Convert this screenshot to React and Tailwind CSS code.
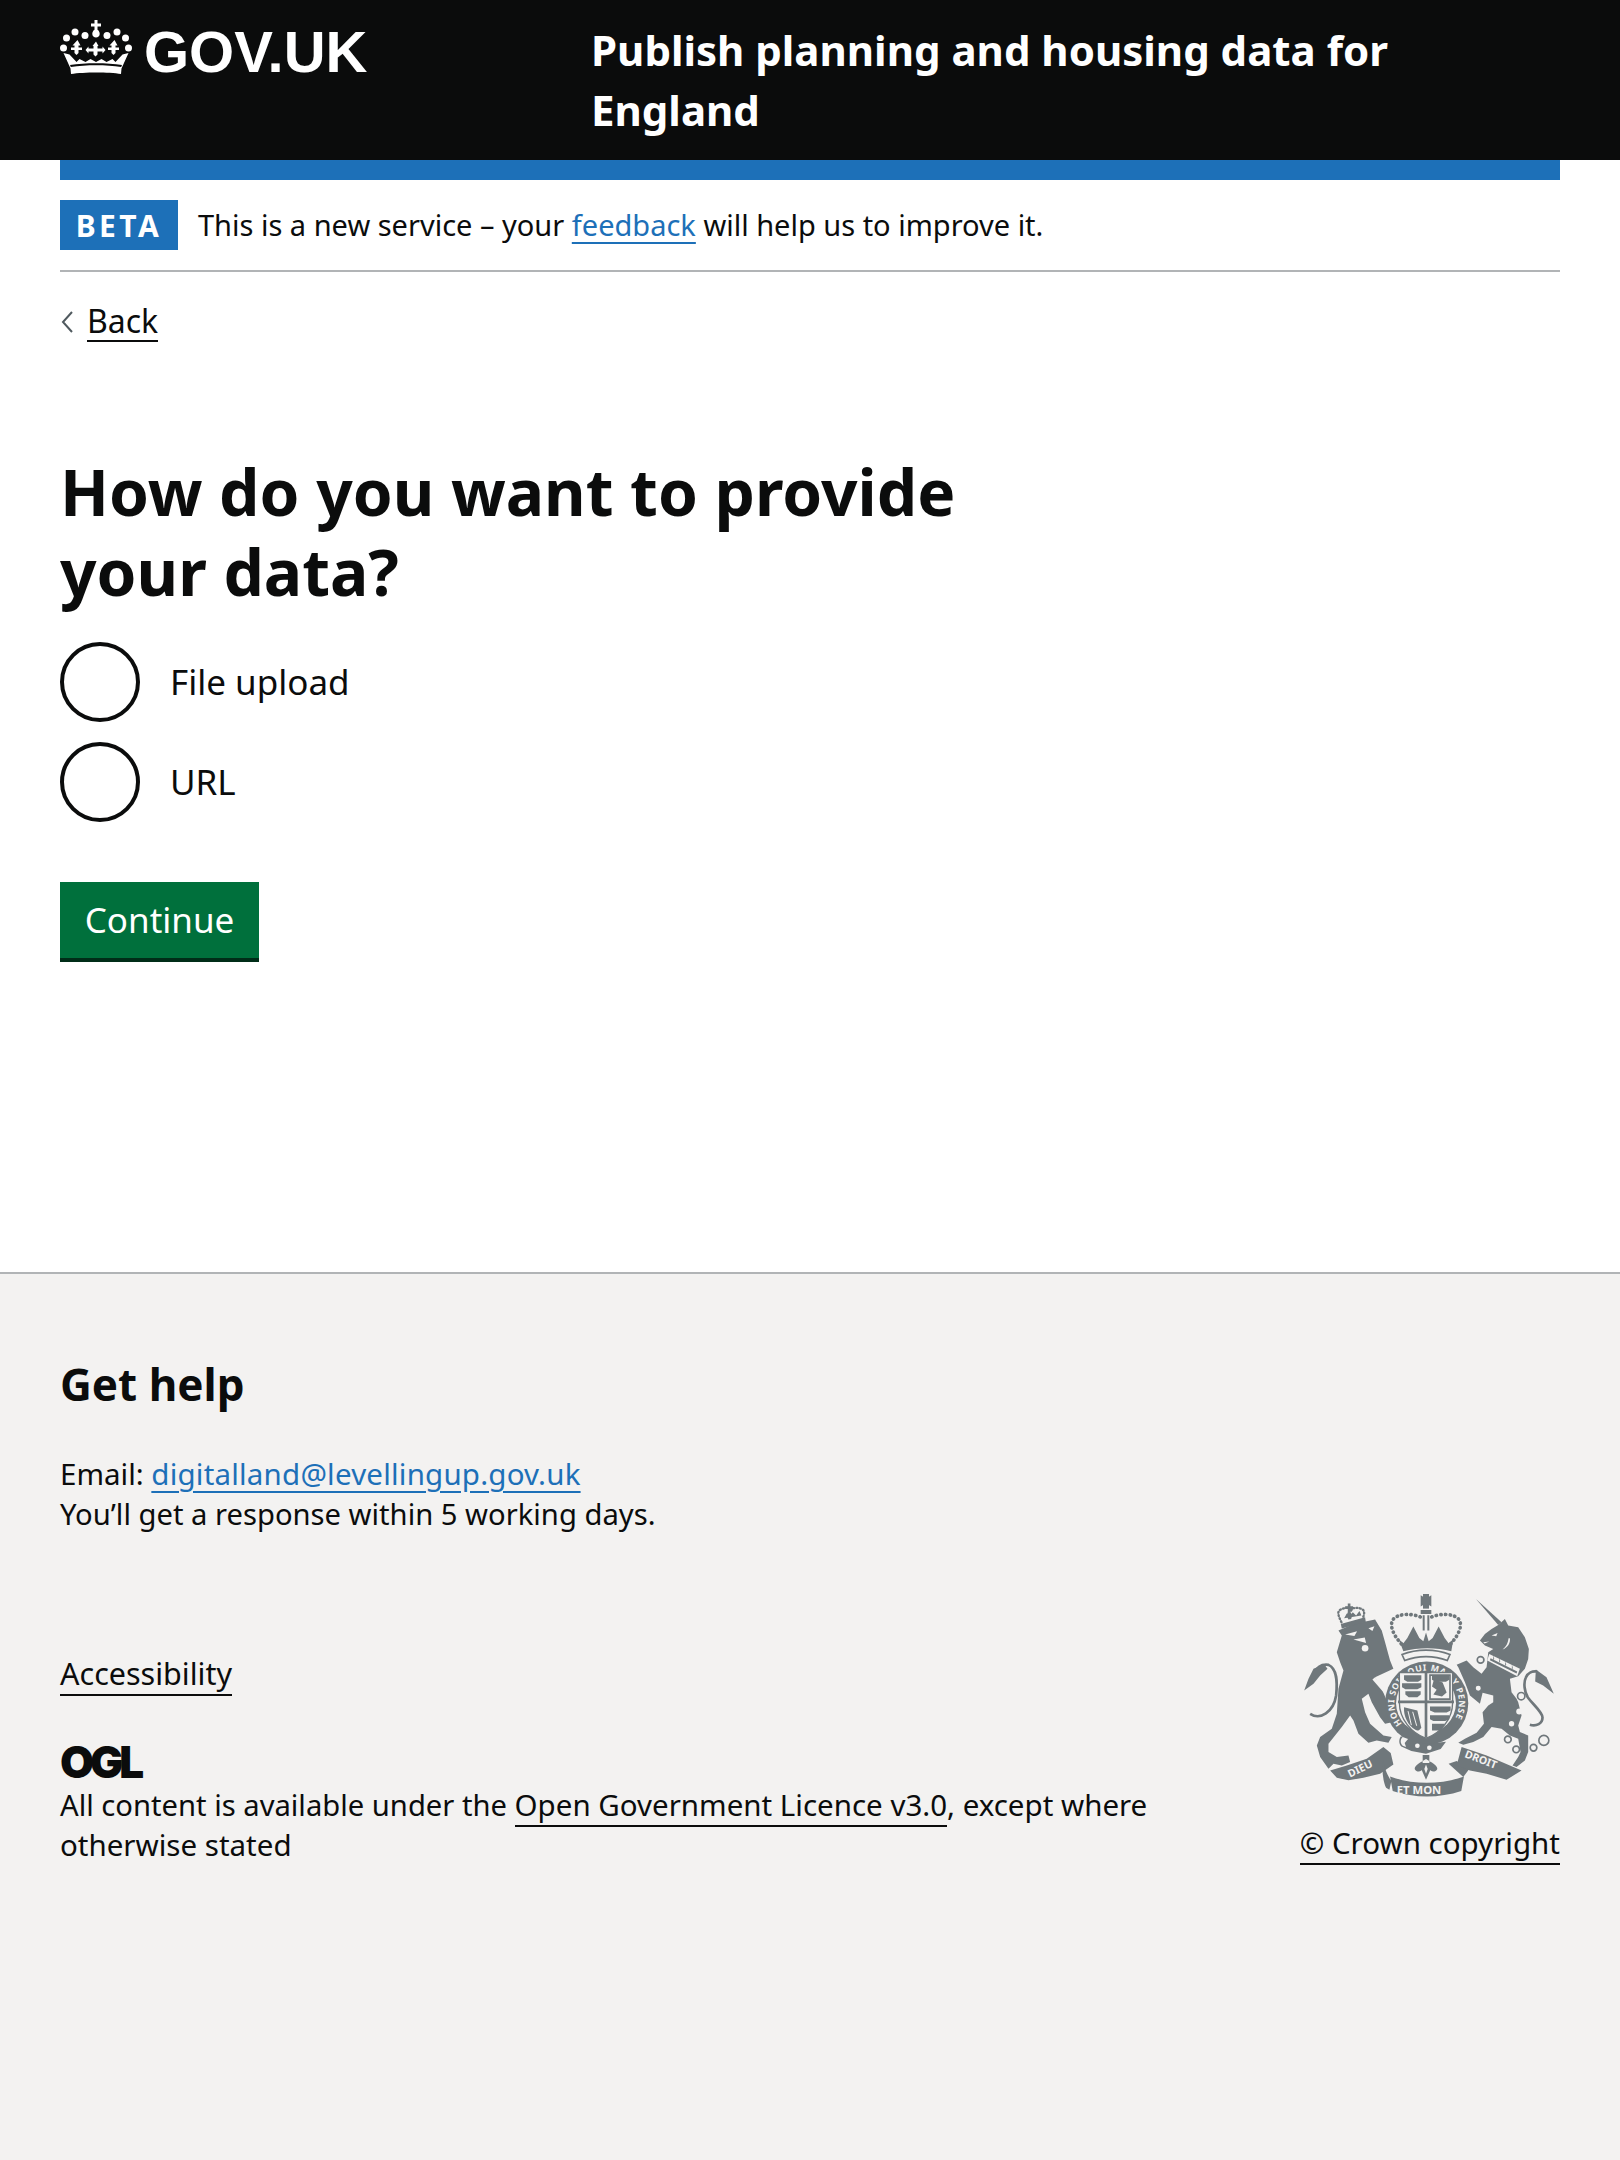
const font = "font-['Noto_Sans',sans-serif]";

const CrownLogo = () => (
  <svg viewBox="0 0 72 54" className="h-[54px] w-[72px] shrink-0" fill="white">
    <path d="M34.500 0h3v3.500h3.500v3h-3.500v3.200c1.600 1 2.200 2.600 2.200 4.300 0 2-1.700 3.600-3.700 3.600s-3.700-1.600-3.700-3.600c0-1.700.6-3.300 2.200-4.300V6.500H31v-3h3.500z" />
    <circle cx="15" cy="12" r="3.500" />
    <circle cx="25" cy="15.500" r="3.500" />
    <circle cx="47" cy="15.500" r="3.500" />
    <circle cx="57" cy="12" r="3.500" />
    <circle cx="6.500" cy="18" r="3.500" />
    <circle cx="65.500" cy="18" r="3.500" />
    <circle cx="3.500" cy="28" r="3.500" />
    <circle cx="68.500" cy="28" r="3.500" />
    <path d="M17.500 20l3 5.500h-2v2h3.500v2.500h-3.500v3l-2 2-2-2v-3H11v-2.500h3.500v-2h-2z" />
    <path d="M54.500 20l3 5.500h-2v2H59v2.500h-3.500v3l-2 2-2-2v-3H48v-2.500h3.500v-2h-2z" />
    <path d="M36 21.500l2.500 4.500h-1v2.500h5v-2l3 3.500-3 3.500v-2h-5v3l-2 2-2-2v-3h-5v2l-3-3.500 3-3.500v2h5V26h-1z" />
    <path d="M3.500 33l6 1.500 7 7.500 3-3 6 3 5-3 5.500 3 5.500-3 5 3 6-3 3 3 7-7.500 6-1.500-7 15.500-.5 5.500c-12-2-37-2-50 0l-.5-5.500z" />
    <path d="M10 45c15-2.500 37-2.500 52 0l-.8 2c-15-2.300-35-2.300-50.400 0z" fill="#0b0c0c" />
  </svg>
);

const RoyalArms = () => (
  <svg viewBox="0 0 900 700" className="-mr-[20px] h-[233px] w-[300px]" fill="#6f777b">
    {/* lion */}
    <g transform="translate(60 45)">
      <path d="M115 125L160 105 225 92 245 125 255 160 270 215 280 240 225 265 245 300 260 335 285 375 280 400 255 405 240 385 215 340 205 315 185 330 195 370 210 405 250 440 275 445 265 462 230 455 205 462 175 435 160 395 150 380 125 415 85 465 85 490 110 505 145 500 150 520 125 530 100 525 85 540 60 505 50 470 60 445 95 420 110 375 115 300 130 245 120 220 110 190 125 140z" />
      <path d="M135 137l36-10-8 14zM205 118l18-6-6 14zM160 152l34-6 4 16z" fill="#f3f2f1" />
      <circle cx="195" cy="178" r="10" fill="#f3f2f1" />
      <path d="M30 375C60 395 100 370 108 320 112 280 112 240 85 228 65 225 50 235 40 255" fill="none" stroke="#6f777b" strokeWidth="8" />
      <path d="M72 226L40 240 25 270 12 305 40 285 60 260 82 240z" />
      <path d="M225 265l50 62-6 5-52-60z" fill="#f3f2f1" />
      <path d="M122 105l73-20 2 14-72 20z" />
      <path d="M124 100c-10-20-12-30-6-36 12-8 24-8 30-6l4 8 6-8c10-2 24-2 32 6 4 8 2 16-4 26" fill="none" stroke="#6f777b" strokeWidth="7" strokeDasharray="3 7" strokeLinecap="round" />
      <path d="M143 44h8v8h8v8h-8v10l6 8-4 12-8 2-6-12 4-10V60h-8v-8h8z" />
      <path d="M132 88l8-14 8 10 10-14 10 10 10-14 6 14z" />
    </g>
    {/* unicorn */}
    <g transform="translate(450 45)">
      <path d="M138 30L215 100 205 108z" />
      <path d="M205 108L225 90 235 110 265 115 285 145 297 180 295 210 285 240 265 262 240 270 245 310 260 330 265 340 275 380 265 410 270 430 295 440 295 490 285 515 260 535 248 530 265 505 272 490 265 450 240 440 215 420 185 415 160 445 130 460 100 468 85 462 105 450 140 432 162 405 158 370 175 350 190 340 190 320 158 312 150 345 120 320 105 280 85 235 80 228 110 215 130 235 155 255 170 235 175 190 190 180 165 170 150 155 165 135 185 120z" />
      <path d="M178 195l92 45-8 22-90-47z" fill="#f3f2f1" />
      <path d="M182 208l80 40-2 6-80-40zM190 198l3 12-3 3zM208 206l3 12-3 3zM226 216l3 12-3 3zM246 226l3 12-3 3z" />
      <path d="M240 148c2 14-6 28-22 34 12-10 16-20 18-34z" fill="#f3f2f1" />
      <path d="M185 140l18-8-4 10zM160 160l18-2-14 6z" fill="#f3f2f1" />
      <circle cx="268" cy="368" r="9" fill="#f3f2f1" />
      <circle cx="245" cy="405" r="8" fill="#f3f2f1" />
      <path d="M300 408c20 6 38-4 38-22 0-16-26-36-44-60-10-16-14-44-6-60 6-14 20-20 34-18" fill="none" stroke="#6f777b" strokeWidth="8" />
      <path d="M318 242l32 23 22 50-32-25-24-12z" />
      <g fill="none" stroke="#6f777b" strokeWidth="5">
        <circle cx="152" cy="213" r="10" />
        <circle cx="145" cy="298" r="10" fill="#f3f2f1" />
        <circle cx="274" cy="322" r="11" fill="#f3f2f1" />
        <circle cx="234" cy="452" r="10" />
        <circle cx="259" cy="482" r="10" />
        <circle cx="311" cy="477" r="10" />
        <circle cx="342" cy="455" r="15" />
      </g>
    </g>
    {/* crown */}
    <path d="M422 64l10 6h12l10-6v34l-10-6h-12l-10 6z" />
    <path d="M429 60h18v44h-18z" />
    <path d="M364 210c-24-26-36-54-26-72 12-18 56-24 94-4M512 210c24-26 36-54 26-72-12-18-56-24-94-4" fill="none" stroke="#6f777b" strokeWidth="11" strokeDasharray="1 13" strokeLinecap="round" />
    <path d="M422 108h32v12h-32zM428 124h6v46h-6zM442 124h6v46h-6z" />
    <path d="M356 196l14 12 12-16 18-34 18 34 12 10 8-26 8 26 12-10 18-34 18 34 12 16 14-12-6 36c-44-12-100-12-144 0z" />
    <path d="M366 242c44-18 100-18 144 0l-8 18c-40-16-88-16-128 0z" fill="#f3f2f1" stroke="#6f777b" strokeWidth="5" />
    {/* shield and garter */}
    <circle cx="440" cy="388" r="125" />
    <path id="garter-ring" d="M366 450A97 97 0 1 1 514 450" fill="none" stroke="none" />
    <text fontFamily="Noto Sans, sans-serif" fontWeight="700" fontSize="26" letterSpacing="2" fill="#f3f2f1">
      <textPath href="#garter-ring">HONI SOIT QUI MAL Y PENSE</textPath>
    </text>
    <circle cx="438" cy="388" r="90" fill="#f3f2f1" />
    <path d="M358 296h160v90c0 50-36 92-80 108-44-16-80-58-80-108z" fill="#f3f2f1" stroke="#6f777b" strokeWidth="4" />
    <path d="M434 292h8v200h-8zM354 380h168v8H354z" />
    <g strokeWidth="0">
      <path d="M372 304h52v14l-10 6h-32l-10-6zM366 328h58v12l-12 6h-36l-10-6zM376 352h46v10l-10 8h-26l-10-8z" />
      <path d="M456 304h52v14l-10 6h-32l-10-6zM450 398h62v12l-12 6h-36l-14-6zM450 424h58v12l-12 6h-36l-10-6zM456 450h40l-14 20h-26z" />
      <path d="M462 316l26 10 12 30-14 12-26-6 10-14-14-10z" />
    </g>
    <path d="M450 304h60v72h-60z" fill="none" stroke="#6f777b" strokeWidth="5" />
    <path d="M372 400l40 10 12 52c-8 10-12 10-18 6-22-14-36-40-34-68z" />
    <path d="M384 412l10 42M398 414l12 42" stroke="#f3f2f1" strokeWidth="3" />
    <path d="M362 488c-6 10-6 22 2 30l30 14 44 8 44-14 16-22-56 6-44-6-12-16z" />
    <path d="M368 490c-8 8-8 18 0 26l10 4-4-12 10-12z" fill="#f3f2f1" />
    <circle cx="412" cy="516" r="7" fill="#f3f2f1" />
    <circle cx="448" cy="522" r="7" fill="#f3f2f1" />
    {/* motto */}
    <path d="M150 590L200 575 260 555 310 520 332 538 340 572 300 600 250 612 205 620 170 612z" />
    <path d="M310 560c4 30 16 50 24 62l-6 26-10-6c-10-20-14-60-8-82z" />
    <path d="M330 608c70 26 150 26 222 0l-8 44c-66 22-140 22-206 0z" />
    <path d="M506 570l44 40 18-24-38-24z" />
    <path d="M545 520L620 545 725 590 680 618 620 600 570 590 530 575z" />
    <path d="M428 544h20v24h-20zM438 556c-16 10-34 18-34 30 6 12 22 8 22 0l-4-4 16 36 16-36-4 4c0 8 16 12 22 0 0-12-18-20-34-30z" />
    <path d="M438 572l-5 14 5 14 5-14z" fill="#f3f2f1" />
    <g fontFamily="Noto Sans, sans-serif" fontWeight="700" fontSize="32" fill="#f3f2f1">
      <text x="210" y="612" transform="rotate(-26 210 612)">DIEU</text>
      <text x="552" y="550" transform="rotate(21 552 550)">DROIT</text>
      <text x="350" y="660" fontSize="34">ET MON</text>
    </g>
  </svg>
);

const Radio = ({ label }) => (
  <label className="flex items-center gap-[30px]">
    <span className="h-[80px] w-[80px] shrink-0 rounded-full border-4 border-[#0b0c0c] bg-white" />
    <span className="text-[35px] leading-[40px]">{label}</span>
  </label>
);

export default function App() {
  return (
    <div className={`flex min-h-screen flex-col bg-white text-[#0b0c0c] ${font}`}>
      <header className="flex h-[160px] bg-[#0b0c0c] px-[60px] pt-[20px] text-white">
        <div className="flex w-[531px] items-start gap-[12px]">
          <CrownLogo />
          <span className="font-['Liberation_Sans',sans-serif] text-[58px] font-bold leading-[64px]">GOV.UK</span>
        </div>
        <div className="w-[900px] text-[42px] font-bold leading-[60px]">
          Publish planning and housing data for England
        </div>
      </header>

      <main className="px-[60px]">
        <div className="h-[20px] bg-[#1d70b8]" />
        <div className="flex items-center gap-[20px] border-b-2 border-[#b1b4b6] py-[20px]">
          <span className="flex h-[50px] w-[118px] items-center justify-center bg-[#1d70b8] text-[30px] font-bold tracking-[3.5px] text-white">BETA</span>
          <p className="text-[29px] leading-[40px]">
            This is a new service – your{" "}
            <a className="text-[#1d70b8] underline underline-offset-[6px]">feedback</a> will help us to improve it.
          </p>
        </div>
        <a className="mt-[30px] flex items-center gap-[13px] text-[32px] leading-[40px]">
          <svg viewBox="0 0 14 24" className="h-[24px] w-[14px]" fill="none" stroke="#505a5f" strokeWidth="2">
            <path d="M12 2 3 12l9 10" />
          </svg>
          <span className="border-b-2 border-[#0b0c0c] leading-[38px]">Back</span>
        </a>

        <h1 className="mt-[110px] max-w-[1000px] text-[64px] font-bold leading-[80px]">
          How do you want to provide your data?
        </h1>
        <div className="mt-[30px] flex flex-col gap-[20px]">
          <Radio label="File upload" />
          <Radio label="URL" />
        </div>
        <button className="mb-[310px] mt-[60px] block h-[80px] w-[199px] border-b-4 border-[#002d18] bg-[#00703c] text-[35px] text-white">
          Continue
        </button>
      </main>

      <footer className="flex-1 border-t-2 border-[#b1b4b6] bg-[#f3f2f1] px-[60px] pt-[80px]">
        <h2 className="text-[44px] font-bold leading-[60px]">Get help</h2>
        <p className="mt-[40px] text-[29.500px] leading-[40px]">
          Email: <a className="text-[#1d70b8] tracking-[0.2px] underline underline-offset-[6px]">digitalland@levellingup.gov.uk</a>
          <br />
          <span className="text-[29.200px]">You’ll get a response within 5 working days.</span>
        </p>
        <div className="mt-[40px] flex items-end justify-between">
          <div className="w-[1120px] text-[29.500px] leading-[40px]">
            <a className="border-b-2 border-[#0b0c0c] text-[30.500px]">Accessibility</a>
            <div className="mb-[6px] mt-[51px] font-['Inter',sans-serif] text-[44px] font-black leading-[34px] tracking-[-4px]">OGL</div>
            <p>
              <span className="text-[29.200px]">All content is available under the </span>
              <a className="border-b-2 border-[#0b0c0c]">Open Government Licence v3.0</a>, except where otherwise stated
            </p>
          </div>
          <div className="flex flex-col items-end text-[29.500px] leading-[40px]">
            <RoyalArms />
            <a className="mt-[16px] border-b-2 border-[#0b0c0c]">© Crown copyright</a>
          </div>
        </div>
      </footer>
    </div>
  );
}
